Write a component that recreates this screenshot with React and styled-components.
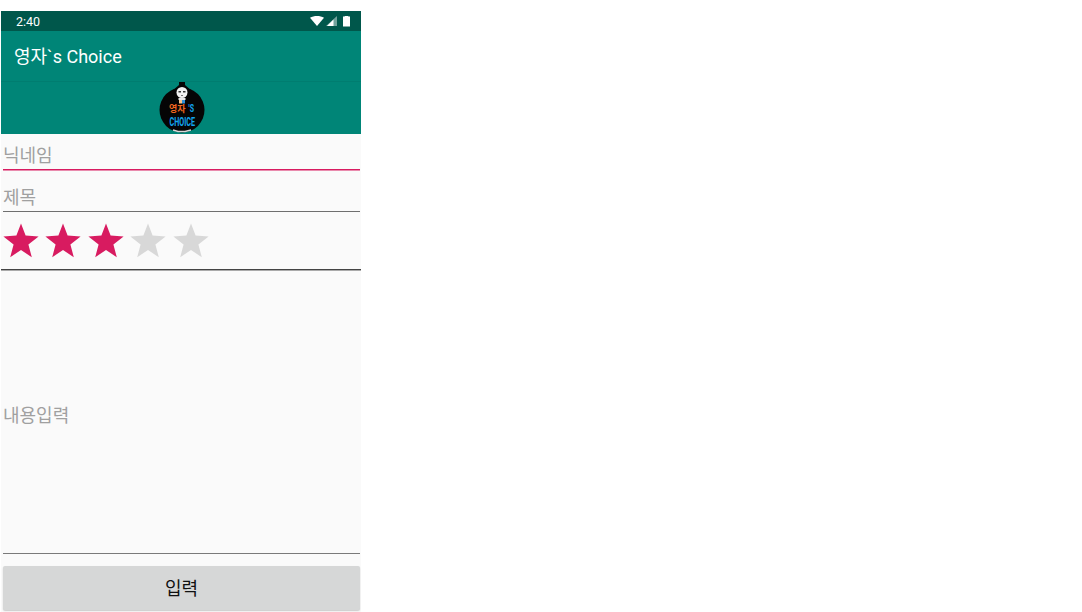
import React from 'react'
import styled, { createGlobalStyle } from 'styled-components'

const Global = createGlobalStyle`
    html, body { margin: 0; padding: 0; background: #fff; }
    body { font-family: Roboto, "Noto Sans CJK KR", sans-serif; }
    input, textarea, button { font-family: inherit; }
`

const STAR = 'M18 0.5 L22.6 12.6 L35.6 13.4 L25.4 21.6 L28.8 34.2 L18 27.1 L7.2 34.2 L10.6 21.6 L0.4 13.4 L13.4 12.6 Z'

function Star({ on }) {
    return (
        <StarIcon viewBox="0 0 36 35" $on={on}>
            <path d={STAR} />
        </StarIcon>
    )
}

function App() {
    return (
        <Screen>
            <Global />
            <StatusBar>
                <Clock>2:40</Clock>
                <StatusIcons>
                    <svg width="14" height="10" viewBox="0 0 14 10">
                        <path d="M0 1.8 C4 -0.6 10 -0.6 14 1.8 L7 10 Z" fill="#fff" />
                    </svg>
                    <svg width="11" height="10" viewBox="0 0 11 10">
                        <path d="M11 0 V10 H0 Z" fill="#fff" fillOpacity="0.45" />
                        <path d="M7.5 3.5 V10 H1 Z" fill="#fff" />
                    </svg>
                    <Battery />
                </StatusIcons>
            </StatusBar>
            <AppBar>
                <Title>영자`s Choice</Title>
            </AppBar>
            <LogoBar>
                <svg width="48" height="52" viewBox="0 0 48 52">
                    <path d="M21 0 H27 V3 L34 9 H14 L21 3 Z" fill="#060606" />
                    <circle cx="24" cy="28" r="22.5" fill="#050505" />
                    <ellipse cx="24" cy="10.5" rx="5.5" ry="5.5" fill="#f2f2f2" />
                    <rect x="20.5" y="9" width="2.5" height="1.5" fill="#333" />
                    <rect x="25" y="9" width="2.5" height="1.5" fill="#333" />
                    <rect x="23" y="13" width="2" height="1" fill="#777" />
                    <rect x="20.5" y="16" width="7" height="2" fill="#e8e8e8" />
                    <rect x="21" y="18" width="3" height="3.5" fill="#f4c48e" />
                    <rect x="24" y="18" width="3" height="3.5" fill="#2f8fd8" />
                    <LogoHangul x="11" y="29.5" fontSize="9">영자</LogoHangul>
                    <LogoLatin transform="translate(30.5 29.5) scale(0.7 1)" fontSize="10">'S</LogoLatin>
                    <LogoLatin transform="translate(11.5 44) scale(0.6 1)" fontSize="12">CHOICE</LogoLatin>
                    <path d="M15 48 L20 49.5 L27 49.5 L33 48" stroke="#d8d8d8" strokeWidth="1.4" fill="none" />
                </svg>
            </LogoBar>
            <Form>
                <Nick placeholder="닉네임" />
                <Subject placeholder="제목" />
                <Stars>
                    {[1, 2, 3, 4, 5].map((n) => <Star key={n} on={n <= 3} />)}
                </Stars>
                <Content>
                    <Placeholder>내용입력</Placeholder>
                </Content>
                <Submit>입력</Submit>
            </Form>
        </Screen>
    )
}

export default App

const Screen = styled.div`
    width: 360px;
    height: 601px;
    margin: 11px 0 0 1px;
    background: #fafafa;
    display: flex;
    flex-direction: column;
    overflow: hidden;
`
const StatusBar = styled.div`
    height: 20px;
    flex: none;
    background: #00574b;
    display: flex;
    align-items: center;
    justify-content: space-between;
    padding: 0 11px 0 15px;
    color: #fff;
`
const Clock = styled.span`
    font-size: 12.5px;
    font-weight: 400;
`
const StatusIcons = styled.div`
    display: flex;
    align-items: center;
    gap: 2px;
    svg { display: block; }
`
const Battery = styled.div`
    width: 7px;
    height: 11px;
    margin-left: 4px;
    background: #fff;
    clip-path: polygon(25% 0, 75% 0, 75% 8%, 100% 8%, 100% 100%, 0 100%, 0 8%, 25% 8%);
`
const AppBar = styled.div`
    height: 51px;
    flex: none;
    background: #008577;
    display: flex;
    align-items: center;
    padding: 0 13px 3px;
    border-bottom: 1px solid #007d70;
    box-sizing: border-box;
`
const Title = styled.h1`
    margin: 0;
    color: #fff;
    font-size: 18px;
    font-weight: 400;
`
const LogoBar = styled.div`
    height: 52px;
    flex: none;
    background: #008577;
    display: flex;
    justify-content: center;
    align-items: flex-start;
    padding-left: 1px;
    box-sizing: border-box;
    svg { display: block; }
`
const LogoHangul = styled.text`
    font-family: "Noto Sans CJK KR", sans-serif;
    font-weight: 700;
    fill: #f0651e;
`
const LogoLatin = styled.text`
    font-family: Roboto, sans-serif;
    font-weight: 700;
    fill: #12a5ee;
`
const Form = styled.div`
    flex: 1;
    display: flex;
    flex-direction: column;
    padding: 0 1px 0 2px;
    min-height: 0;
`
const Field = styled.input`
    display: block;
    width: 100%;
    box-sizing: border-box;
    background: transparent;
    border: 0;
    outline: 0;
    padding: 0;
    font-size: 18px;
    color: #222;
    &::placeholder { color: #a0a0a0; opacity: 1; }
`
const Nick = styled(Field)`
    height: 36px;
    padding-top: 7px;
    border-bottom: 1px solid #d81b60;
    box-shadow: 0 1px 0 rgba(216, 27, 96, 0.5);
`
const Subject = styled(Field)`
    height: 42px;
    padding-top: 14px;
    border-bottom: 1px solid #6f6f6f;
`
const Stars = styled.div`
    height: 58px;
    flex: none;
    margin: 0 -1px 0 -2px;
    padding: 11px 0 0 2px;
    box-sizing: border-box;
    display: flex;
    gap: 6.4px;
    border-bottom: 1px solid #444;
    box-shadow: 0 1px 0 #aaa;
`
const StarIcon = styled.svg`
    width: 36px;
    height: 35px;
    fill: ${(props) => (props.$on ? '#d81b60' : '#d8d8d8')};
`
const Content = styled.div`
    height: 284px;
    flex: none;
    box-sizing: border-box;
    display: flex;
    align-items: center;
    padding-top: 4px;
    border-bottom: 1px solid #7a7a7a;
`
const Placeholder = styled.span`
    font-size: 18px;
    color: #a0a0a0;
`
const Submit = styled.button`
    display: block;
    height: 44px;
    margin-top: 12px;
    flex: none;
    border: 0;
    padding: 0 0 2px;
    border-radius: 2px;
    background: #d6d7d7;
    box-shadow: 0 1px 1.5px rgba(0, 0, 0, 0.2);
    color: #111;
    font-size: 18px;
`
